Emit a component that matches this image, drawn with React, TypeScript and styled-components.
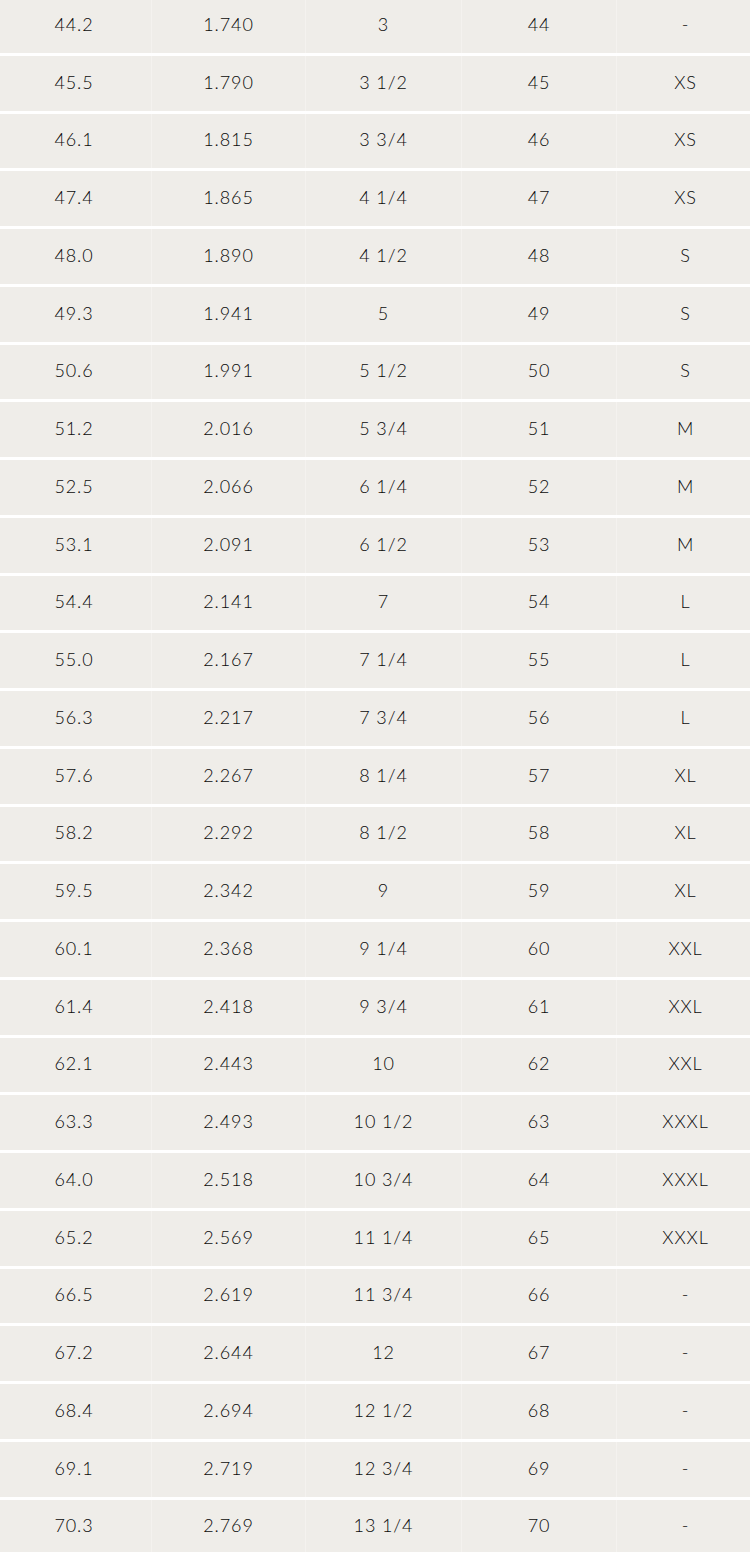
import { createGlobalStyle, styled } from 'styled-components';

const sizeRows: [string, string, string, string, string][] = [
  ['44.2', '1.740', '3', '44', '-'],
  ['45.5', '1.790', '3 1/2', '45', 'XS'],
  ['46.1', '1.815', '3 3/4', '46', 'XS'],
  ['47.4', '1.865', '4 1/4', '47', 'XS'],
  ['48.0', '1.890', '4 1/2', '48', 'S'],
  ['49.3', '1.941', '5', '49', 'S'],
  ['50.6', '1.991', '5 1/2', '50', 'S'],
  ['51.2', '2.016', '5 3/4', '51', 'M'],
  ['52.5', '2.066', '6 1/4', '52', 'M'],
  ['53.1', '2.091', '6 1/2', '53', 'M'],
  ['54.4', '2.141', '7', '54', 'L'],
  ['55.0', '2.167', '7 1/4', '55', 'L'],
  ['56.3', '2.217', '7 3/4', '56', 'L'],
  ['57.6', '2.267', '8 1/4', '57', 'XL'],
  ['58.2', '2.292', '8 1/2', '58', 'XL'],
  ['59.5', '2.342', '9', '59', 'XL'],
  ['60.1', '2.368', '9 1/4', '60', 'XXL'],
  ['61.4', '2.418', '9 3/4', '61', 'XXL'],
  ['62.1', '2.443', '10', '62', 'XXL'],
  ['63.3', '2.493', '10 1/2', '63', 'XXXL'],
  ['64.0', '2.518', '10 3/4', '64', 'XXXL'],
  ['65.2', '2.569', '11 1/4', '65', 'XXXL'],
  ['66.5', '2.619', '11 3/4', '66', '-'],
  ['67.2', '2.644', '12', '67', '-'],
  ['68.4', '2.694', '12 1/2', '68', '-'],
  ['69.1', '2.719', '12 3/4', '69', '-'],
  ['70.3', '2.769', '13 1/4', '70', '-'],
];

const GlobalStyle = createGlobalStyle`
  html, body {
    margin: 0;
    padding: 0;
    background: #ffffff;
    overflow: hidden;
  }
  body {
    font-family: Lato, "Open Sans", sans-serif;
  }
`;

export default function App() {
  return (
    <>
      <GlobalStyle />
      <Styled.Table>
        {sizeRows.map(row => (
          <Styled.Row key={row[0]}>
            {row.map((cell, i) => (
              <Styled.Cell key={i} $last={i === row.length - 1}>
                {cell}
              </Styled.Cell>
            ))}
          </Styled.Row>
        ))}
      </Styled.Table>
    </>
  );
}

const Styled = {
  Table: styled.div`
    display: flex;
    flex-direction: column;
    width: 753px;
    margin-left: -3px;
    margin-top: -2px;
  `,
  Row: styled.div`
    display: grid;
    grid-template-columns: 155px 154px 156px 155px 1fr;
    height: 54.76px;
    border-bottom: 3px solid #ffffff;
    background: #efede9;
  `,
  Cell: styled.div<{ $last?: boolean }>`
    display: flex;
    align-items: center;
    justify-content: center;
    font-size: 18px;
    font-weight: 300;
    letter-spacing: 0.9px;
    color: #0a0a0a;
    border-right: ${p => (p.$last ? 'none' : '1px solid #f4f2ef')};
    padding-bottom: 3px;
    padding-left: ${p => (p.$last ? '4px' : '0')};
  `,
};
